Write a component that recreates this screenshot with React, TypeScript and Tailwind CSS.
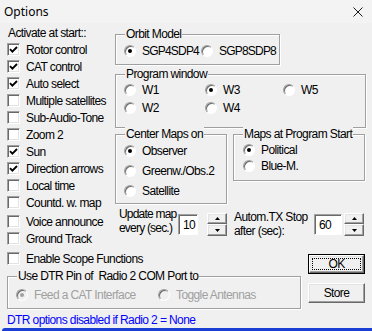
import React from 'react'

const FONT = "font-['Liberation_Sans',Arial,sans-serif] text-[12px] tracking-[-0.6px] leading-[16px] text-black"

function CheckBox({ checked, label, className = '' }: { checked?: boolean; label: string; className?: string }) {
  return (
    <div className={`flex h-[17px] items-center ${className}`}>
      <span className="flex h-[13px] w-[13px] shrink-0 items-center justify-center border border-t-[#a0a0a0] border-l-[#a0a0a0] border-r-white border-b-white bg-white shadow-[inset_1px_1px_0_#696969,inset_-1px_-1px_0_#e3e3e3]">
        {checked && (
          <svg width="9" height="9" viewBox="0 0 9 9" aria-hidden="true">
            <path d="M1 4.2 L3.4 6.6 L8 2" stroke="black" strokeWidth="1.9" fill="none" />
          </svg>
        )}
      </span>
      <span className="ml-[6px] whitespace-nowrap">{label}</span>
    </div>
  )
}

function Radio({ checked, label, disabled, className = '' }: { checked?: boolean; label: string; disabled?: boolean; className?: string }) {
  return (
    <div className={`flex h-[16px] items-center ${className}`}>
      <span
        className={`flex h-[12px] w-[12px] shrink-0 items-center justify-center rounded-full border border-t-[#a0a0a0] border-l-[#a0a0a0] border-r-white border-b-white shadow-[inset_1px_1px_0_#696969] ${
          disabled ? 'bg-[#f0f0f0]' : 'bg-white'
        }`}
      >
        {checked && <span className={`h-[4px] w-[4px] rounded-full ${disabled ? 'bg-[#a0a0a0]' : 'bg-black'}`} />}
      </span>
      <span className={`ml-[6px] whitespace-nowrap ${disabled ? 'text-[#a0a0a0]' : ''}`}>{label}</span>
    </div>
  )
}

function Group({ title, className = '', children }: { title: string; className?: string; children?: React.ReactNode }) {
  return (
    <div className={`relative border border-[#a0a0a0] shadow-[inset_1px_1px_0_#fff,1px_1px_0_#fff] ${className}`}>
      <span className="absolute -top-[9px] left-[9px] bg-[#f0f0f0] px-[1px] whitespace-pre leading-[16px]">{title}</span>
      {children}
    </div>
  )
}

function Edit({ value, className = '' }: { value: string; className?: string }) {
  return (
    <div className={`flex h-[21px] items-center border border-t-[#a0a0a0] border-l-[#a0a0a0] border-r-white border-b-white bg-white pl-[4px] shadow-[inset_1px_1px_0_#696969] ${className}`}>
      {value}
    </div>
  )
}

const raised =
  'border border-t-white border-l-white border-r-[#696969] border-b-[#696969] bg-[#f0f0f0] shadow-[inset_-1px_-1px_0_#a0a0a0,inset_1px_1px_0_#e3e3e3]'

function Spin({ className = '' }: { className?: string }) {
  return (
    <div className={`flex h-[23px] w-[20px] flex-col ${className}`}>
      <div className={`flex h-[11px] items-center justify-center ${raised}`}>
        <svg width="5" height="3" viewBox="0 0 5 3" aria-hidden="true">
          <path d="M0 3 H5 L2.5 0 Z" fill="black" />
        </svg>
      </div>
      <div className={`flex h-[12px] items-center justify-center ${raised}`}>
        <svg width="5" height="3" viewBox="0 0 5 3" aria-hidden="true">
          <path d="M0 0 H5 L2.5 3 Z" fill="black" />
        </svg>
      </div>
    </div>
  )
}

export default function App() {
  const left = [
    { label: 'Rotor control', checked: true },
    { label: 'CAT control', checked: true },
    { label: 'Auto select', checked: true },
    { label: 'Multiple satellites' },
    { label: 'Sub-Audio-Tone' },
    { label: 'Zoom 2' },
    { label: 'Sun', checked: true },
    { label: 'Direction arrows', checked: true },
    { label: 'Local time' },
    { label: 'Countd. w. map' },
  ]

  return (
    <div className="flex h-[331px] w-[372px] flex-col overflow-hidden bg-[#f0f0f0]">
      {/* title bar */}
      <div className="flex h-[23px] shrink-0 items-center justify-between bg-[#f3f3f3] pl-[4px] pr-[9px]">
        <span className="font-['Noto_Sans',sans-serif] text-[12px] text-black">Options</span>
        <svg width="10" height="10" viewBox="0 0 10 10" aria-hidden="true">
          <path d="M0.5 0.5 L9.5 9.5 M9.5 0.5 L0.5 9.5" stroke="#1a1a1a" strokeWidth="1" fill="none" />
        </svg>
      </div>

      <div className={`flex h-[225px] shrink-0 ${FONT}`}>
        {/* left column */}
        <div className="ml-[7px] flex w-[108px] flex-col">
          <div className="mt-[2px] h-[15px] pl-[1px] whitespace-nowrap">Activate at start::</div>
          <div className="mt-[1px] flex flex-col">
            {left.map((c) => (
              <CheckBox key={c.label} label={c.label} checked={c.checked} />
            ))}
          </div>
          <CheckBox label="Voice announce" className="mt-[2px]" />
          <CheckBox label="Ground Track" />
        </div>

        {/* right column */}
        <div className="flex flex-col">
          <Group title="Orbit Model" className="mt-[11px] h-[31px] w-[165px]">
            <div className="flex pl-[8px] pt-[8px] tracking-[-0.8px]">
              <Radio checked label="SGP4SDP4" className="w-[77px]" />
              <Radio label="SGP8SDP8" />
            </div>
          </Group>

          <Group title="Program window" className="mt-[9px] h-[54px] w-[251px]">
            <div className="grid grid-cols-[81px_78px_auto] gap-y-[2px] pl-[8px] pt-[7px]">
              <Radio label="W1" />
              <Radio checked label="W3" />
              <Radio label="W5" />
              <Radio label="W2" />
              <Radio label="W4" />
            </div>
          </Group>

          <div className="mt-[6px] flex items-start">
            <Group title="Center Maps on" className="h-[70px] w-[112px]">
              <div className="flex flex-col gap-[4px] pl-[8px] pt-[8px]">
                <Radio checked label="Observer" />
                <Radio label="Greenw./Obs.2" />
                <Radio label="Satellite" />
              </div>
            </Group>
            <Group title="Maps at Program Start" className="ml-[6px] h-[47px] w-[132px]">
              <div className="flex flex-col pl-[9px] pt-[7px]">
                <Radio checked label="Political" />
                <Radio label="Blue-M." />
              </div>
            </Group>
          </div>

          <div className="mt-[3px] flex items-start">
            <div className="ml-[4px] w-[59px] leading-[14px] tracking-[-0.8px] whitespace-nowrap">
              <div>Update map</div>
              <div>every (sec.)</div>
            </div>
            <Edit value="10" className="mt-[7px] w-[20px]" />
            <Spin className="ml-[9px] mt-[6px]" />
            <div className="ml-[7px] mt-[3px] w-[80px] leading-[14px] whitespace-nowrap">
              <div>Autom.TX Stop</div>
              <div>after (sec):</div>
            </div>
            <Edit value="60" className="mt-[7px] w-[28px]" />
            <Spin className="ml-[2px] mt-[6px]" />
          </div>
        </div>
      </div>

      {/* bottom section */}
      <div className={`flex shrink-0 ${FONT}`}>
        <div className="ml-[7px] flex w-[294px] flex-col">
          <CheckBox label="Enable Scope Functions" className="mt-[2px]" />
          <Group title="Use DTR Pin of  Radio 2 COM Port to" className="mt-[9px] h-[33px] w-[294px]">
            <div className="flex pl-[8px] pt-[10px]">
              <Radio disabled checked label="Feed a CAT Interface" className="w-[142px]" />
              <Radio disabled label="Toggle Antennas" />
            </div>
          </Group>
          <div className="mt-[4px] leading-[14px] whitespace-nowrap text-[#0000ff]">DTR options disabled if Radio 2 = None</div>
        </div>

        <div className="ml-[7px] flex w-[57px] flex-col">
          <div className="mt-[6px] h-[20px] border border-black">
            <div className={`h-full p-[2px] ${raised}`}>
              <div className="flex h-full items-center justify-center border border-dotted border-black">OK</div>
            </div>
          </div>
          <div className={`mt-[9px] flex h-[20px] items-center justify-center ${raised}`}>Store</div>
        </div>
      </div>

      <div className="ml-[2px] mt-auto h-[3px] rounded-tl-[3px] bg-[#1a3dd4]" />
    </div>
  )
}
